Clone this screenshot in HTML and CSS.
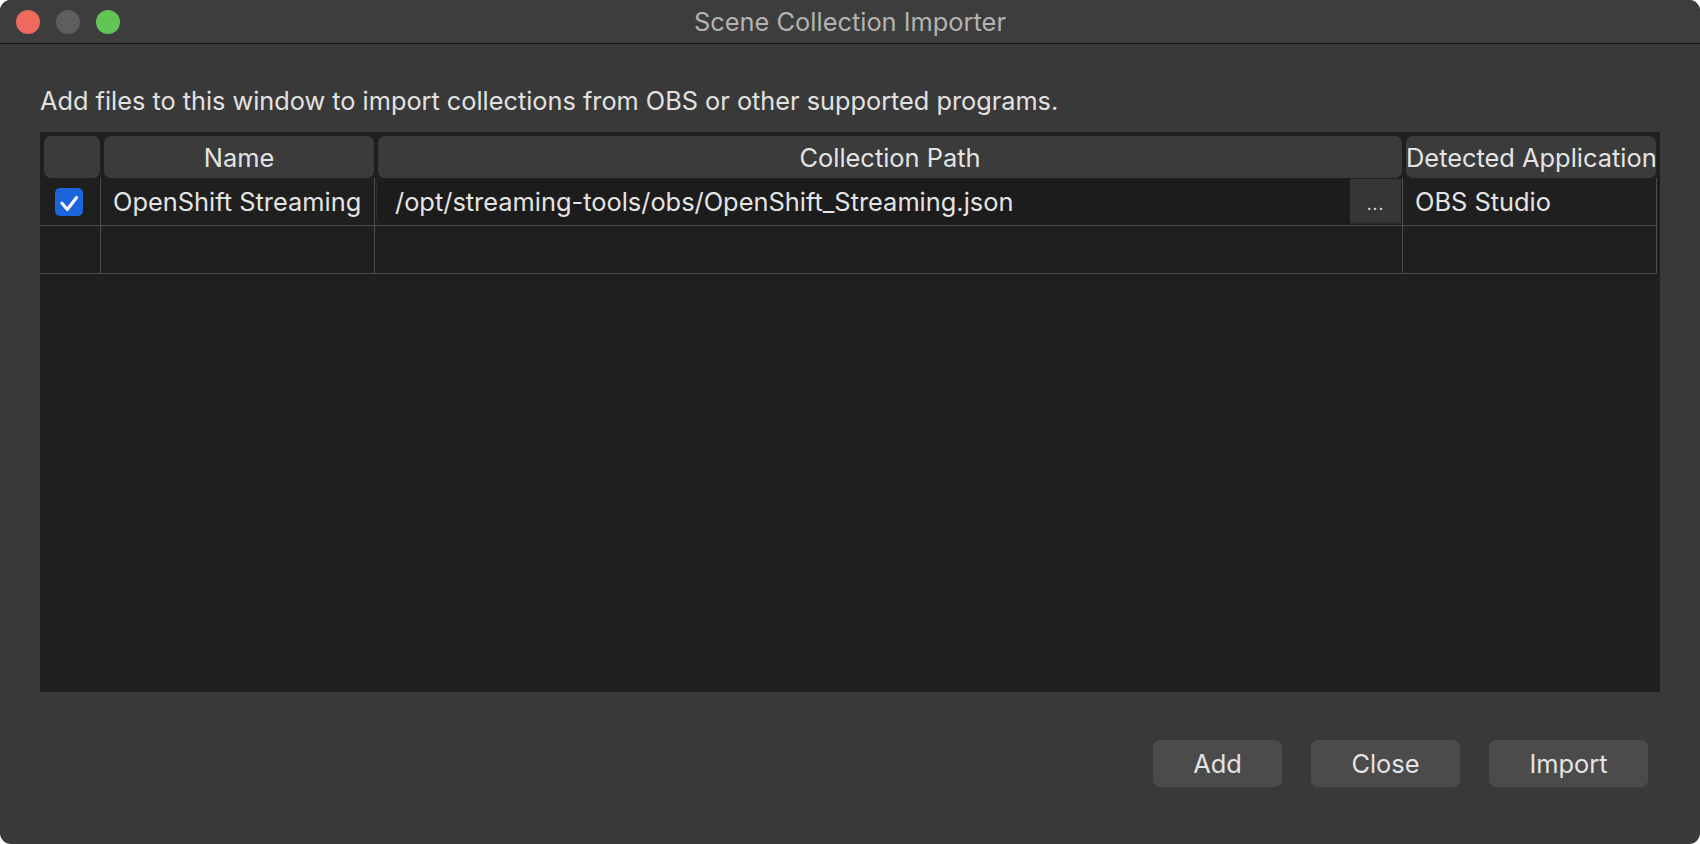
FILE: index.html
```html
<!DOCTYPE html>
<html>
<head>
<meta charset="utf-8">
<link rel="stylesheet" href="styles.css">
</head>
<body>
<div class="window">
  <div class="titlebar">
    <div class="lights">
      <span class="light red"></span>
      <span class="light gray"></span>
      <span class="light green"></span>
    </div>
    <div class="title">Scene Collection Importer</div>
    <div></div>
  </div>
  <div class="content">
    <p class="desc">Add files to this window to import collections from OBS or other supported programs.</p>
    <div class="table">
      <div class="grid">
        <div class="hcell first"></div>
        <div class="hcell">Name</div>
        <div class="hcell">Collection Path</div>
        <div class="hcell app">Detected Application</div>

        <div class="cell check-cell">
          <span class="checkbox">
            <svg width="28" height="28" viewBox="0 0 28 28"><path d="M7 15.2 L12.3 21.6 L21.6 9.6" fill="none" stroke="#f4f6fb" stroke-width="3.2" stroke-linecap="round" stroke-linejoin="round"/></svg>
          </span>
        </div>
        <div class="cell text">OpenShift Streaming</div>
        <div class="cell path-cell">
          <div class="editor">/opt/streaming-tools/obs/OpenShift_Streaming.json</div>
          <div class="browse">...</div>
        </div>
        <div class="cell text">OBS Studio</div>

        <div class="cell"></div>
        <div class="cell"></div>
        <div class="cell"></div>
        <div class="cell"></div>
      </div>
    </div>
    <div class="buttons">
      <button class="btn add">Add</button>
      <button class="btn close">Close</button>
      <button class="btn import">Import</button>
    </div>
  </div>
</div>
</body>
</html>
```

FILE: styles.css
```css
* { box-sizing: border-box; }
html, body { margin: 0; padding: 0; background: #ffffff; }
body { font-family: Inter, "Noto Sans", sans-serif; color: #dedede; }

.window {
  width: 1700px;
  height: 844px;
  background: #393939;
  border-radius: 11px;
  overflow: hidden;
  display: flex;
  flex-direction: column;
}

.titlebar {
  height: 44px;
  flex: none;
  background: #3d3d3d;
  border-bottom: 1px solid #161616;
  display: grid;
  grid-template-columns: 1fr auto 1fr;
  align-items: center;
}
.lights { display: flex; gap: 16px; padding-left: 16px; }
.light { width: 24px; height: 24px; border-radius: 50%; display: block; }
.red { background: #ee6a5f; }
.gray { background: #5e5e5e; }
.green { background: #63c555; }
.title { font-size: 25.4px; color: #b3b3b3; }

.content {
  flex: 1;
  padding: 42px 40px 0 40px;
  display: flex;
  flex-direction: column;
}
.desc {
  margin: 0 0 16px 0;
  height: 30px;
  line-height: 30px;
  font-size: 25.3px;
  color: #e2e2e2;
  white-space: nowrap;
}

.table {
  height: 560px;
  background: #1f1f1f;
  padding-top: 4px;
}
.grid {
  display: grid;
  grid-template-columns: 61px 274px 1028px 254px;
  grid-template-rows: 42px 48px 48px;
}
.hcell {
  background: #3b3b3b;
  border-radius: 7px;
  margin: 0 1px 0 3px;
  display: flex;
  align-items: center;
  justify-content: center;
  font-size: 25.4px;
  color: #e4e4e4;
  white-space: nowrap;
}
.hcell.first { margin-left: 4px; }
.hcell.app { justify-content: flex-start; overflow: visible; }

.cell {
  border-right: 1px solid #4c4c4c;
  border-bottom: 1px solid #4c4c4c;
  display: flex;
  align-items: center;
  font-size: 25.4px;
  color: #e4e4e4;
  white-space: nowrap;
}
.cell.text { padding-left: 12px; }
.check-cell { justify-content: center; padding-right: 2px; }
.checkbox {
  width: 28px;
  height: 28px;
  border-radius: 5px;
  background: #1b65dc;
  display: flex;
  align-items: center;
  justify-content: center;
}
.checkbox svg { display: block; }
.path-cell { padding: 1px; align-items: stretch; }
.editor {
  flex: 1;
  background: #1c1c1c;
  border-radius: 7px 0 0 7px;
  border-left: 1px solid #2c2c2c;
  display: flex;
  align-items: center;
  padding-left: 18px;
}
.browse {
  width: 51px;
  background: #363636;
  border-bottom: 2px solid #2a2a2a;
  display: flex;
  align-items: center;
  justify-content: center;
  font-size: 17px;
  color: #d8d8d8;
  padding-top: 6px;
  letter-spacing: 1px;
}

.buttons {
  display: flex;
  justify-content: flex-end;
  gap: 29px;
  margin-top: 48px;
  padding-right: 12px;
}
.btn {
  height: 47px;
  border: none;
  border-radius: 7px;
  background: #4b4b4b;
  color: #e4e4e4;
  font-family: Inter, "Noto Sans", sans-serif;
  font-size: 25.4px;
  padding: 0;
}
.add { width: 129px; }
.close { width: 149px; }
.import { width: 159px; }
```
